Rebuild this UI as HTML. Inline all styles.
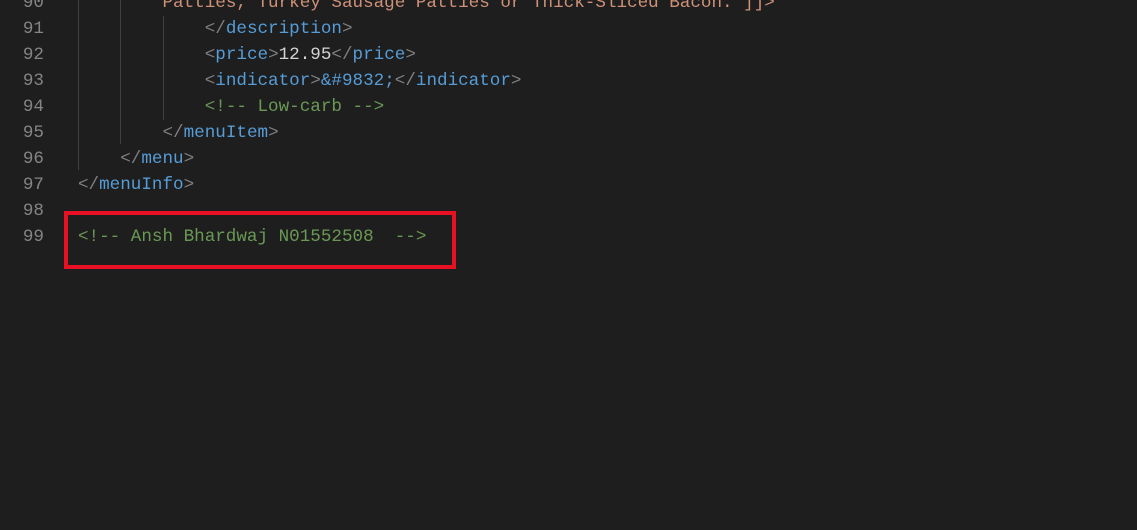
<!DOCTYPE html>
<html><head><style>
body{margin:0;background:#1e1e1e;width:1137px;height:530px;overflow:hidden;position:relative;font-family:"Liberation Mono",monospace;font-size:17.6px}
.ln{position:absolute;left:0;width:44px;text-align:right;color:#858585;height:26px;line-height:26px}
.c{position:absolute;left:78px;height:26px;line-height:26px;white-space:pre;color:#d4d4d4}
.t{color:#808080}.n{color:#569cd6}.s{color:#ce9178}.g{color:#6a9955}.w{color:#d4d4d4}
.gd{position:absolute;width:1px;background:#404040}
</style></head><body>
<div class="gd" style="left:78px;top:0;height:170px"></div>
<div class="gd" style="left:120px;top:0;height:144px"></div>
<div class="gd" style="left:163px;top:16px;height:104px"></div>
<div class="ln" style="top:-10px">90</div><div class="c" style="top:-10px">        <span class="s">Patties, Turkey Sausage Patties or Thick-Sliced Bacon. ]]&gt;</span></div>
<div class="ln" style="top:16px">91</div><div class="c" style="top:16px">            <span class="t">&lt;/</span><span class="n">description</span><span class="t">&gt;</span></div>
<div class="ln" style="top:42px">92</div><div class="c" style="top:42px">            <span class="t">&lt;</span><span class="n">price</span><span class="t">&gt;</span><span class="w">12.95</span><span class="t">&lt;/</span><span class="n">price</span><span class="t">&gt;</span></div>
<div class="ln" style="top:68px">93</div><div class="c" style="top:68px">            <span class="t">&lt;</span><span class="n">indicator</span><span class="t">&gt;</span><span class="n">&amp;#9832;</span><span class="t">&lt;/</span><span class="n">indicator</span><span class="t">&gt;</span></div>
<div class="ln" style="top:94px">94</div><div class="c" style="top:94px">            <span class="g">&lt;!-- Low-carb --&gt;</span></div>
<div class="ln" style="top:120px">95</div><div class="c" style="top:120px">        <span class="t">&lt;/</span><span class="n">menuItem</span><span class="t">&gt;</span></div>
<div class="ln" style="top:146px">96</div><div class="c" style="top:146px">    <span class="t">&lt;/</span><span class="n">menu</span><span class="t">&gt;</span></div>
<div class="ln" style="top:172px">97</div><div class="c" style="top:172px"><span class="t">&lt;/</span><span class="n">menuInfo</span><span class="t">&gt;</span></div>
<div class="ln" style="top:198px">98</div>
<div class="ln" style="top:224px">99</div><div class="c" style="top:224px"><span class="g">&lt;!-- Ansh Bhardwaj N01552508  --&gt;</span></div>
<div style="position:absolute;left:64px;top:211px;width:384px;height:50px;border:4px solid #e81123"></div>
</body></html>
